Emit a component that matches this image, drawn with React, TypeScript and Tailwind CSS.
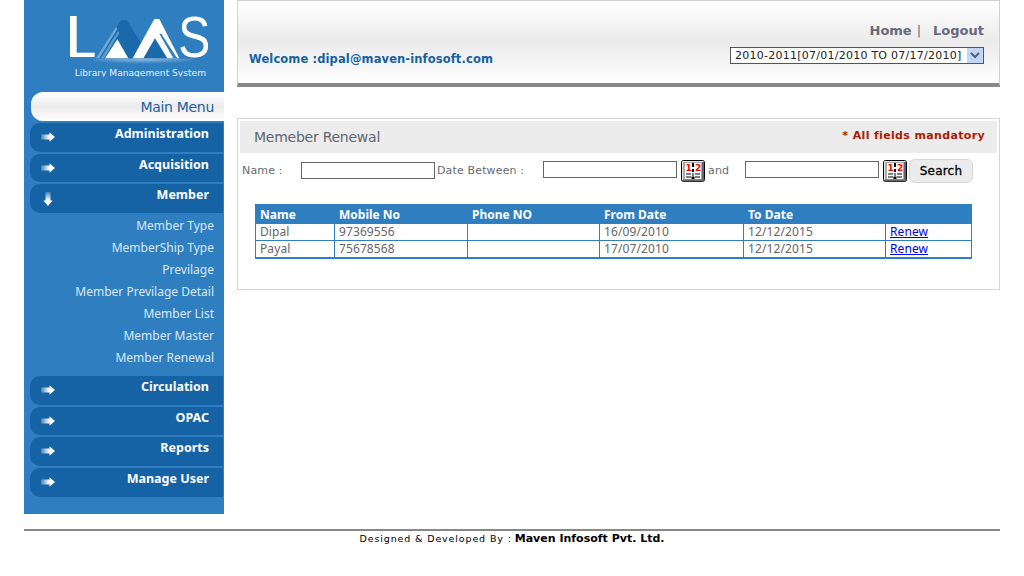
import React from "react";

const Arrow = ({ down = false }: { down?: boolean }) => (
  <svg width="16" height="16" viewBox="0 0 16 16" className={down ? "rotate-90 blur-[0.3px]" : "blur-[0.3px]"}>
    <defs>
      <linearGradient id="arrowFade" x1="0" x2="1" y1="0" y2="0">
        <stop offset="0" stopColor="#ffffff" stopOpacity="0.2" />
        <stop offset="0.55" stopColor="#ffffff" stopOpacity="0.95" />
        <stop offset="1" stopColor="#ffffff" />
      </linearGradient>
    </defs>
    <path d="M1 5.6H9.5V3.3L15 8L9.5 12.7V10.4H1Z" fill="url(#arrowFade)" />
  </svg>
);

const MenuItem = ({ label, down = false }: { label: string; down?: boolean }) => (
  <div className="ml-[6px] flex h-[28.7px] w-[193px] items-start justify-between rounded-l-[10px] bg-[#1562a4] pl-[10px] pr-[14px]">
    <div className={down ? "mt-[7px]" : "mt-[6px]"}>
      <Arrow down={down} />
    </div>
    <span className="mt-[2px] font-['Noto_Sans',sans-serif] text-[12.5px] font-bold leading-[17px] text-white">{label}</span>
  </div>
);

const Calendar = () => (
  <svg width="24" height="22" viewBox="0 0 24 22" className="shrink-0">
    <rect x="0.5" y="0.5" width="23" height="21" rx="2" fill="#a9a9a9" stroke="#000" />
    <path d="M1.5 1.5H22.5M1.5 1.5V20" stroke="#e8e8e8" />
    <path d="M22 2V20.5H2" stroke="#666" strokeWidth="2" fill="none" />
    <rect x="4" y="3" width="16" height="16" fill="#fff" />
    <text x="4.5" y="11" fontFamily="'DejaVu Sans', sans-serif" fontWeight="700" fontSize="9" fill="#ff0000">
      1
    </text>
    <text x="14" y="11" fontFamily="'DejaVu Sans', sans-serif" fontWeight="700" fontSize="9" fill="#ff0000">
      2
    </text>
    <path d="M12 3V7M12 9V12" stroke="#000" strokeWidth="2" />
    <path d="M5 14H10M14 14H19M5 17H10M14 17H19" stroke="#000" />
    <path d="M12 13V16" stroke="#000" />
    <rect x="10.5" y="16.5" width="3" height="2.5" fill="#000" />
  </svg>
);

const Logo = () => (
  <svg width="160" height="80" viewBox="0 0 480 240" className="ml-[36px] block">
    <defs>
      <radialGradient id="glow" cx="0.5" cy="0" r="0.6">
        <stop offset="0" stopColor="#ffffff" stopOpacity="0.5" />
        <stop offset="1" stopColor="#ffffff" stopOpacity="0" />
      </radialGradient>
      <clipPath id="captionClip">
        <rect x="0" y="190" width="480" height="25" />
      </clipPath>
    </defs>
    <rect x="30" y="33" width="20" height="122" fill="#fff" />
    <rect x="30" y="143" width="74" height="13" fill="#fff" />
    <polygon points="183,45 200,45 272,160 110,160" fill="#1a69aa" />
    <polygon points="108,160 168,66 172,72 118,160" fill="#6fa8d6" />
    <polygon points="122,160 174,78 178,84 132,160" fill="#5a9bd0" />
    <polygon points="135,160 172,103 205,160" fill="#fff" />
    <polygon points="218,160 283,42 298,42 358,160" fill="#fff" />
    <polygon points="250,160 285,100 322,160" fill="#1a69aa" />
    <polygon points="298,86 304,86 348,160 340,160" fill="#2f7ebf" />
    <polygon points="308,100 312,100 352,160 348,160" fill="#2f7ebf" />
    <rect x="100" y="161" width="300" height="26" fill="url(#glow)" />
    <text x="355" y="155" fontFamily="'Liberation Sans', sans-serif" fontSize="172" fill="#fff" textLength="96" lengthAdjust="spacingAndGlyphs">
      S
    </text>
    <text
      x="44"
      y="214"
      clipPath="url(#captionClip)"
      fontFamily="'DejaVu Sans', sans-serif"
      fontSize="27"
      fill="#e6f0f8"
      textLength="394"
      lengthAdjust="spacingAndGlyphs"
    >
      Library Management System
    </text>
  </svg>
);

const subItems = [
  "Member Type",
  "MemberShip Type",
  "Previlage",
  "Member Previlage Detail",
  "Member List",
  "Member Master",
  "Member Renewal",
];

const inputCls = "h-[17px] w-[134px] shrink-0 border border-[#666666] bg-white";
const labelCls = "mt-[1px] text-[11px] tracking-[0.15px] text-[#666b70]";

const rows = [
  ["Dipal", "97369556", "", "16/09/2010", "12/12/2015"],
  ["Payal", "75678568", "", "17/07/2010", "12/12/2015"],
];

export default function App() {
  return (
    <div className="h-[576px] w-[1024px] overflow-hidden bg-white px-[24px] font-['DejaVu_Sans',sans-serif]">
      <div className="flex gap-[13px]">
        <aside className="h-[514px] w-[200px] shrink-0 bg-[#2f7ebf] pt-[5px]">
          <Logo />
          <div className="ml-[7px] mt-[7px] flex h-[29px] w-[193px] items-center justify-end rounded-l-[12px] bg-gradient-to-b from-white via-[#ebebeb] to-white pr-[10px] pt-[1px] text-[14px] tracking-[-0.3px] text-[#1a62a0]">
            Main Menu
          </div>
          <div className="mt-[2px] flex flex-col gap-[2px]">
            <MenuItem label="Administration" />
            <MenuItem label="Acquisition" />
            <MenuItem label="Member" down />
          </div>
          <ul className="mb-[7px] mt-[2px] pr-[10px] text-right font-['Noto_Sans',sans-serif] text-[12px] text-[#dbe8f4]">
            {subItems.map((s) => (
              <li key={s} className="h-[22px] leading-[22px]">
                {s}
              </li>
            ))}
          </ul>
          <div className="flex flex-col gap-[2px]">
            <MenuItem label="Circulation" />
            <MenuItem label="OPAC" />
            <MenuItem label="Reports" />
            <MenuItem label="Manage User" />
          </div>
        </aside>

        <main className="w-[763px] shrink-0">
          <header className="flex h-[87px] items-end justify-between border-x border-t border-b-[4px] border-x-[#d0d0d0] border-t-[#d0d0d0] border-b-[#888888] bg-gradient-to-b from-white via-[#ebebeb] to-white pb-[19px] pl-[11px] pr-[15px]">
            <div className="mb-[-3px] text-[11.5px] font-bold leading-[15px] tracking-[0.12px] text-[#15629f]">
              Welcome :dipal@maven-infosoft.com
            </div>
            <div className="flex flex-col items-end">
              <div className="mb-[8px] flex text-[13px] font-bold leading-[16px] text-[#666b7a]">
                <span>Home</span>
                <span className="ml-[5px] font-normal">|</span>
                <span className="ml-[12px]">Logout</span>
              </div>
              <div className="relative h-[17px] w-[254px]">
                <select className="block h-full w-full appearance-none rounded-none border border-[#555555] bg-white pl-[4px] text-[11px] tracking-[0.25px] text-[#222222] outline-none">
                  <option>2010-2011[07/01/2010 TO 07/17/2010]</option>
                </select>
                <div className="absolute right-[1px] top-[1px] flex h-[15px] w-[16px] items-center justify-center bg-[#c3d5f5]">
                  <svg width="10" height="7" viewBox="0 0 10 7">
                    <path d="M1 1L5 5L9 1" stroke="#4d6185" strokeWidth="2" fill="none" />
                  </svg>
                </div>
              </div>
            </div>
          </header>

          <section className="mt-[31px] h-[172px] border border-[#d5d5d5] p-[2px]">
            <div className="flex h-[32px] items-center justify-between bg-[#ececec] pl-[14px] pr-[12px]">
              <h1 className="mt-[1px] text-[14px] font-normal tracking-[-0.25px] text-[#5f6670]">Memeber Renewal</h1>
              <span className="-mt-[1px] text-[11px] font-bold tracking-[0.35px] text-[#b01a00]">* All fields mandatory</span>
            </div>

            <div className="mt-[6px] flex h-[24px] items-center pl-[2px]">
              <span className={`${labelCls} w-[59px] shrink-0`}>Name :</span>
              <input className={`${inputCls} mb-[1px]`} />
              <span className={`${labelCls} ml-[2px] w-[106px] shrink-0`}>Date Between :</span>
              <input className={`${inputCls} mb-[3px]`} />
              <div className="ml-[4px]">
                <Calendar />
              </div>
              <span className={`${labelCls} ml-[3px] w-[37px] shrink-0`}>and</span>
              <input className={`${inputCls} mb-[3px]`} />
              <div className="ml-[4px]">
                <Calendar />
              </div>
              <button className="ml-[2px] h-[24px] w-[64px] rounded-[6px] border border-[#d8d8d8] bg-[#ececec] text-[12px] tracking-[0.2px] text-black [-webkit-text-stroke:0.3px_black]">
                Search
              </button>
            </div>

            <table className="ml-[15px] mt-[21px] w-[716px] table-fixed border-collapse font-['Noto_Sans',sans-serif] text-[12px]">
              <colgroup>
                <col className="w-[79px]" />
                <col className="w-[133px]" />
                <col className="w-[132px]" />
                <col className="w-[144px]" />
                <col className="w-[142px]" />
                <col className="w-[86px]" />
              </colgroup>
              <thead>
                <tr className="h-[19px] bg-[#2f7ebf] text-left text-white">
                  {["Name", "Mobile No", "Phone NO", "From Date", "To Date", ""].map((h, i) => (
                    <th key={i} className="border border-[#2f7ebf] pl-[4px] pt-[1px] font-bold leading-[15px]">
                      {h}
                    </th>
                  ))}
                </tr>
              </thead>
              <tbody className="border-b-2 border-[#2f7ebf]">
                {rows.map((r) => (
                  <tr key={r[0]} className="h-[17px] text-[#666666]">
                    {r.map((c, i) => (
                      <td key={i} className="border border-[#2f7ebf] pb-[1px] pl-[4px] leading-[15px] tracking-[0.1px]">
                        {c}
                      </td>
                    ))}
                    <td className="border border-[#2f7ebf] pb-[1px] pl-[4px] leading-[15px] tracking-[0.1px]">
                      <a href="#" className="text-[#0000ee] underline">
                        Renew
                      </a>
                    </td>
                  </tr>
                ))}
              </tbody>
            </table>
          </section>
        </main>
      </div>

      <footer className="mt-[15px] w-[976px]">
        <div className="h-[2px] bg-[#888888]" />
        <div className="mt-[1px] flex items-center justify-center leading-[14px] text-black">
          <span className="text-[9.5px] tracking-[0.87px]">Designed &amp; Developed By :</span>
          <span className="ml-[3px] text-[11px] font-bold">Maven Infosoft Pvt. Ltd.</span>
        </div>
      </footer>
    </div>
  );
}
